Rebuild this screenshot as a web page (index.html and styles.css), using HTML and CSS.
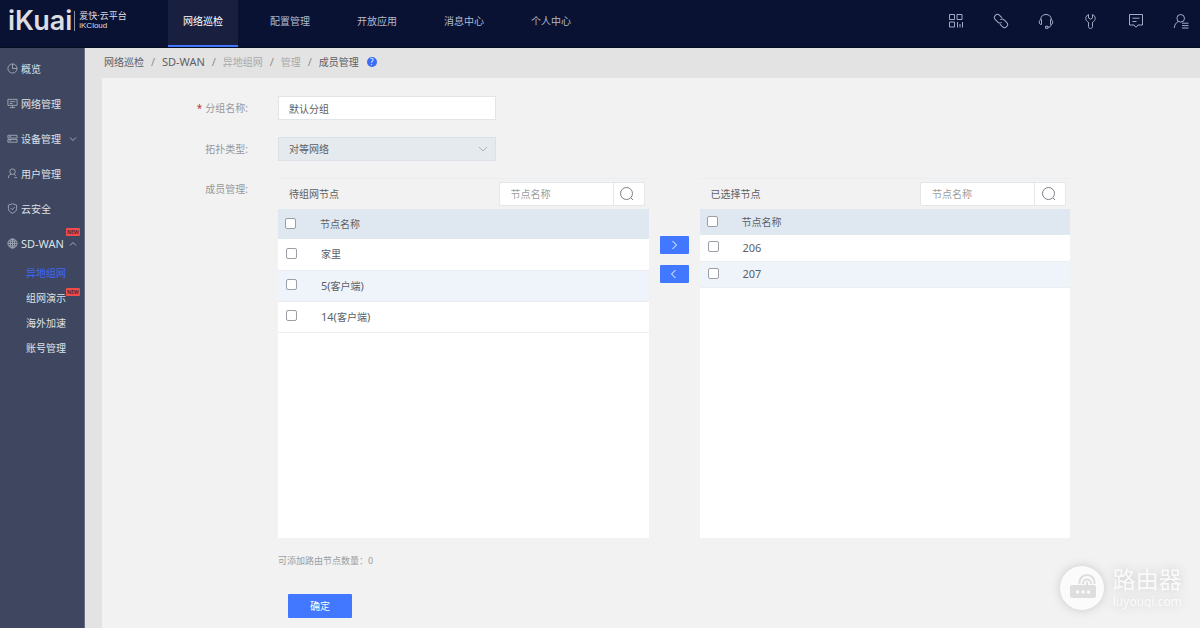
FILE: index.html
```html
<!DOCTYPE html>
<html lang="zh-CN">
<head>
<meta charset="utf-8">
<title>爱快云平台 - 成员管理</title>
<link rel="stylesheet" href="styles.css">
</head>
<body>
<div class="app">
  <header class="topbar">
    <a class="brand" href="#">
      <span class="brand-name">iKuai</span>
      <span class="brand-sub"><span>爱快·云平台</span><span class="brand-en">iKCloud</span></span>
    </a>
    <nav class="topnav">
      <a class="active" href="#">网络巡检</a>
      <a href="#">配置管理</a>
      <a href="#">开放应用</a>
      <a href="#">消息中心</a>
      <a href="#">个人中心</a>
    </nav>
    <div class="tools">
      <button type="button" aria-label="应用"><svg viewBox="0 0 16 16"><path d="M1.500 1.500h5v5h-5zM9 1.500h5v5H9zM1.500 9h5v5h-5zM9.500 9v5.500M12 11v3.500M14.500 9v5.500"/></svg></button>
      <button type="button" aria-label="链接"><svg viewBox="0 0 16 16"><g transform="rotate(45 8 8)"><path d="M6.500 5H3a3 3 0 0 0 0 6h3.500a3 3 0 0 0 3-2.500M9.500 11H13a3 3 0 0 0 0-6H9.500a3 3 0 0 0-3 2.500"/></g></svg></button>
      <button type="button" aria-label="客服"><svg viewBox="0 0 16 16"><path d="M2.500 6.500C3 3 5 1.500 8 1.500s5 1.500 5.500 5M3.500 6.500v5c-3 .5-3-5 0-5zM12.500 6.500v5c3 .5 3-5 0-5zM13 11.500c0 2-1 2.800-3 2.800M7.500 13.300h2.500v2H7.500z"/></svg></button>
      <button type="button" aria-label="工具"><svg viewBox="0 0 16 16"><path d="M5.500 1.500C2 3 1.800 7.500 5.500 9.300v4.200c0 2.600 4 2.600 4 0V9.300c3.700-1.800 3.500-6.300 0-7.800V5L7.500 6.200 5.500 5z"/></svg></button>
      <button type="button" aria-label="消息"><svg viewBox="0 0 16 16"><path d="M1.500 1.500h13v10.500H10l-2 2.300-2-2.300H1.500zM4.500 5.200h7M4.500 8.500h4"/></svg></button>
      <button type="button" aria-label="账号"><svg viewBox="0 0 16 16"><path d="M11.500 5.300a3.800 3.800 0 1 1-7.600 0 3.800 3.800 0 0 1 7.600 0zM5.500 8.500C3 9.500 1.500 12 1.200 15M9 10.200h6.500M9 12.600h6.500M9 15h6.500"/></svg></button>
    </div>
  </header>

  <div class="body">
    <nav class="sidebar">
      <a class="side-item" href="#"><svg viewBox="0 0 12 12"><circle cx="6" cy="6" r="5"/><path d="M6 1v5h5"/></svg>概览</a>
      <a class="side-item" href="#"><svg viewBox="0 0 12 12"><path d="M1 1.500h10v6.500H1zM6 8v2.500M3 10.500h6M3 4h6M3 6h3"/></svg>网络管理</a>
      <a class="side-item" href="#"><svg viewBox="0 0 12 12"><path d="M1 2.500h10v3H1zM1 7h10v3H1zM2.500 4h2M2.500 8.500h2"/></svg>设备管理<svg class="caret" viewBox="0 0 8 8"><path d="M1 2.500l3 3 3-3"/></svg></a>
      <a class="side-item" href="#"><svg viewBox="0 0 12 12"><circle cx="6" cy="4" r="3"/><path d="M4.500 6.500C2.500 7.300 1.500 9 1.500 11M7.500 6.500l2 2M8 10.500h3"/></svg>用户管理</a>
      <a class="side-item" href="#"><svg viewBox="0 0 12 12"><path d="M6 .8l4.500 1.500V6c0 2.500-2 4.300-4.500 5.200C3.500 10.300 1.500 8.500 1.500 6V2.300zM4 5.500l1.600 1.800L8.500 4.500"/></svg>云安全</a>
      <a class="side-item" href="#"><svg viewBox="0 0 12 12"><circle cx="6" cy="6" r="5"/><ellipse cx="6" cy="6" rx="2.300" ry="5"/><path d="M1 6h10M6 1v10M1.800 3.500h8.400M1.800 8.500h8.400"/></svg><span class="latin">SD-WAN</span><svg class="caret tight" viewBox="0 0 8 8"><path d="M1 5.500l3-3 3 3"/></svg><span class="new">NEW</span></a>
      <div class="submenu">
        <a class="current" href="#">异地组网</a>
        <a href="#">组网演示<span class="new">NEW</span></a>
        <a href="#">海外加速</a>
        <a href="#">账号管理</a>
      </div>
    </nav>

    <main class="main">
      <div class="crumbs">
        <a href="#">网络巡检</a><i>/</i><a class="latin" href="#">SD-WAN</a><i>/</i><a class="dim" href="#">异地组网</a><i>/</i><a class="dim" href="#">管理</a><i>/</i><span>成员管理</span>
        <button class="help" type="button" aria-label="帮助">?</button>
      </div>

      <form class="card">
        <div class="field">
          <label for="group"><span class="req">*</span>分组名称:</label>
          <input class="control" id="group" type="text" value="默认分组">
        </div>
        <div class="field">
          <label for="topology">拓扑类型:</label>
          <div class="select-wrap">
            <select class="control" id="topology" disabled><option>对等网络</option></select>
            <svg class="select-arrow" viewBox="0 0 8 8"><path d="M0 2l4 4 4-4"/></svg>
          </div>
        </div>
        <div class="field top">
          <span class="label">成员管理:</span>
          <div class="transfer">
            <section class="panel">
              <div class="panel-head">
                <h2>待组网节点</h2>
                <div class="search">
                  <input type="text" placeholder="节点名称" aria-label="搜索待组网节点">
                  <button type="button" aria-label="搜索"><svg viewBox="0 0 16 16"><circle cx="7.500" cy="7.500" r="6"/><path d="M12 12l2 2"/></svg></button>
                </div>
              </div>
              <table class="nodes roomy">
                <thead><tr><th><input type="checkbox" id="l0"></th><th><label for="l0">节点名称</label></th></tr></thead>
                <tbody>
                  <tr><td><input type="checkbox" id="l1"></td><td><label for="l1">家里</label></td></tr>
                  <tr><td><input type="checkbox" id="l2"></td><td><label for="l2"><span class="latin">5(</span>客户端<span class="latin">)</span></label></td></tr>
                  <tr><td><input type="checkbox" id="l3"></td><td><label for="l3"><span class="latin">14(</span>客户端<span class="latin">)</span></label></td></tr>
                </tbody>
              </table>
            </section>
            <div class="moves">
              <button type="button" aria-label="添加"><svg viewBox="0 0 10 10"><path d="M3.500 1l4 4-4 4"/></svg></button>
              <button type="button" aria-label="移除"><svg viewBox="0 0 10 10"><path d="M6.500 1l-4 4 4 4"/></svg></button>
            </div>
            <section class="panel">
              <div class="panel-head">
                <h2>已选择节点</h2>
                <div class="search">
                  <input type="text" placeholder="节点名称" aria-label="搜索已选择节点">
                  <button type="button" aria-label="搜索"><svg viewBox="0 0 16 16"><circle cx="7.500" cy="7.500" r="6"/><path d="M12 12l2 2"/></svg></button>
                </div>
              </div>
              <table class="nodes">
                <thead><tr><th><input type="checkbox" id="r0"></th><th><label for="r0">节点名称</label></th></tr></thead>
                <tbody>
                  <tr><td><input type="checkbox" id="r1"></td><td><label class="latin" for="r1">206</label></td></tr>
                  <tr><td><input type="checkbox" id="r2"></td><td><label class="latin" for="r2">207</label></td></tr>
                </tbody>
              </table>
            </section>
          </div>
        </div>
        <div class="foot">
          <p>可添加路由节点数量：0</p>
          <button class="submit" type="submit">确定</button>
        </div>
      </form>
    </main>
  </div>

  <div class="watermark">
    <svg viewBox="0 0 44 44"><circle class="disc" cx="22" cy="22" r="22"/><rect class="router" x="10" y="19" width="26" height="13" rx="2"/><path class="wave" d="M27 19v-3M19.500 18c-1-12 16-12 15 0M23 18c-.5-6 8.500-6 8 0"/><g class="disc"><circle cx="17.500" cy="26" r="1.700"/><circle cx="23" cy="26" r="1.700"/><circle cx="28.500" cy="26" r="1.700"/></g></svg>
    <div class="wm-text"><span class="wm-title">路由器</span><span class="wm-url">luyouqi.com</span></div>
  </div>
</div>
</body>
</html>
```

FILE: styles.css
```css
* { box-sizing: border-box; }

body {
  margin: 0;
  font: 10px/16px "Noto Sans", "Noto Sans CJK SC", sans-serif;
  color: #5c5f66;
  background: #f2f2f2;
}

a { color: inherit; text-decoration: none; }
button, input, select { font: inherit; color: inherit; margin: 0; }
button { padding: 0; border: 0; background: none; cursor: pointer; }
svg { fill: none; stroke: currentColor; flex: none; display: block; }
.latin { font-size: 11px; }

.app { display: flex; flex-direction: column; min-height: 100vh; }

/* top bar */
.topbar {
  display: flex;
  height: 48px;
  background: #0a1233;
  border-bottom: 1px solid #060b20;
  color: #b3b9cb;
}
.brand {
  display: flex;
  align-items: center;
  width: 168px;
  padding: 0 0 6px 8px;
  color: #dcdde1;
}
.brand-name { font: 600 27px/32px Inter, sans-serif; }
.brand-sub {
  display: flex;
  flex-direction: column;
  margin-left: 2px;
  padding-left: 4px;
  border-left: 1px solid #8d93a8;
  font-size: 9px;
  line-height: 10px;
  white-space: nowrap;
}
.brand-en { font-family: "Liberation Sans", sans-serif; font-size: 8px; }
.topnav { display: flex; gap: 17px; }
.topnav a {
  width: 70px;
  padding-bottom: 4px;
  line-height: 42px;
  text-align: center;
  border-bottom: 2px solid transparent;
}
.topnav .active { color: #fff; background: #19203f; border-color: #4278ff; }
.tools {
  display: flex;
  align-items: center;
  gap: 29px;
  margin-left: auto;
  padding: 0 11px 6px 0;
  color: #a3abc4;
}
.tools svg { width: 16px; height: 16px; }

.body { display: flex; flex: 1; }

/* sidebar */
.sidebar {
  width: 85px;
  padding-top: 3px;
  background: #3e475f;
  border-right: 1px solid #69718a;
  color: #dde1ea;
}
.side-item {
  position: relative;
  display: flex;
  align-items: center;
  height: 35px;
  padding-left: 7px;
}
.side-item svg { width: 11px; height: 11px; margin-right: 3px; color: #a1a8b8; stroke-width: 1; }
.side-item .caret { width: 8px; height: 8px; margin: 0 0 0 8px; }
.side-item .caret.tight { margin-left: 5px; }
.submenu a {
  position: relative;
  display: block;
  width: 66px;
  padding-left: 26px;
  line-height: 25px;
}
.submenu .current { color: #3e68f5; }
.new {
  position: absolute;
  top: 2px;
  left: 66px;
  padding: 0 1px;
  border-radius: 1px;
  background: #ef4b4b;
  color: #5a2633;
  font: bold 5px/8px "Noto Sans", sans-serif;
}

/* main column */
.main { display: flex; flex-direction: column; flex: 1; padding-left: 17px; background: #e4e3e3; }
.crumbs { display: flex; align-items: center; height: 30px; padding: 0 0 2px 2px; }
.crumbs i { width: 18px; font-size: 11px; font-style: normal; text-align: center; color: #8e8e8e; }
.crumbs .dim { color: #aaa; }
.help {
  width: 10px;
  height: 10px;
  margin-left: 8px;
  border-radius: 50%;
  background: #3c6cf5;
  color: #fff;
  font-size: 8px;
  line-height: 10px;
}

.card { flex: 1; padding: 18px 130px 10px 0; background: #f2f2f2; }
.field { display: grid; grid-template-columns: 148px 1fr; column-gap: 28px; align-items: center; margin-bottom: 17px; }
.field.top { align-items: start; }
.field > label, .label { padding-right: 2px; color: #97999d; text-align: right; }
.label { padding-top: 3px; }
.req { margin-right: 3px; color: #c83232; }
.control {
  width: 218px;
  height: 24px;
  padding: 0 10px;
  border: 1px solid #e2e5e8;
  background: #fff;
}
.select-wrap { position: relative; width: 218px; }
select.control { display: block; appearance: none; background: #e5eaef; border-color: #dbe1e6; opacity: 1; color: #5c5f66; }
.select-arrow { position: absolute; top: 8px; right: 9px; width: 8px; height: 8px; color: #a9b3bd; }

/* transfer lists */
.transfer { display: flex; gap: 11px; }
.panel { flex: 1; min-height: 360px; background: #fff; }
.panel-head {
  display: flex;
  align-items: center;
  justify-content: space-between;
  height: 31px;
  padding: 0 4px 0 11px;
  background: #f2f2f2;
  border: 1px solid #ebeef0;
  border-width: 1px 0 0;
}
h2 { margin: 0; font-size: 10px; font-weight: normal; }
.search { display: flex; height: 24px; border: 1px solid #e4e7ea; border-radius: 2px; background: #fff; }
.search input { width: 114px; padding: 0 11px; border: 0; border-right: 1px solid #e4e7ea; background: none; }
.search input::placeholder { color: #9a9da2; }
.search button { width: 30px; padding-right: 3px; display: grid; place-items: center; color: #7d8086; }
.search svg { width: 16px; height: 16px; }

.nodes { width: 100%; border-collapse: collapse; }
.nodes th, .nodes td { height: 26px; padding: 0; font-weight: normal; text-align: left; }
.nodes.roomy th { height: 30px; }
.nodes.roomy td { height: 31px; }
.nodes th:first-child { width: 42px; padding-left: 7px; }
.nodes td:first-child { padding-left: 8px; }
.nodes td:last-child { padding-left: 1px; }
.nodes thead { background: #dfe7f0; }
.nodes tbody tr { border-bottom: 1px solid #ebeff3; }
.nodes tbody tr:nth-child(even) { background: #eff4fb; }
.nodes input {
  display: block;
  appearance: none;
  width: 11px;
  height: 11px;
  margin-bottom: 2px;
  border: 1px solid #9b9fa5;
  border-radius: 2px;
  background: #fff;
}
.nodes input:checked { background: #4278ff; }

.moves { display: flex; flex-direction: column; gap: 11px; padding-top: 58px; }
.moves button { display: grid; place-items: center; width: 29px; height: 18px; border-radius: 1px; background: #4278ff; color: #fff; }
.moves svg { width: 10px; height: 10px; }

.foot { padding-left: 176px; }
.foot p { margin: -2px 0 25px; font-size: 9px; color: #9c9ea2; }
.submit { width: 64px; height: 24px; margin-left: 10px; border-radius: 1px; background: #4278ff; color: #fff; }

/* watermark */
.watermark {
  position: fixed;
  right: 18px;
  bottom: 18px;
  display: flex;
  gap: 9px;
  color: #fafafa;
  filter: drop-shadow(0 0 5px #c8c8c8);
}
.watermark > svg { width: 44px; height: 44px; stroke: none; }
.watermark .disc { fill: #fbfbfb; }
.watermark .router { fill: #dedede; }
.watermark .wave { stroke: #dedede; stroke-width: 2; }
.wm-text { display: flex; flex-direction: column; gap: 3px; }
.wm-title { font-size: 23px; line-height: 26px; }
.wm-url { font-size: 12px; line-height: 14px; }
```
